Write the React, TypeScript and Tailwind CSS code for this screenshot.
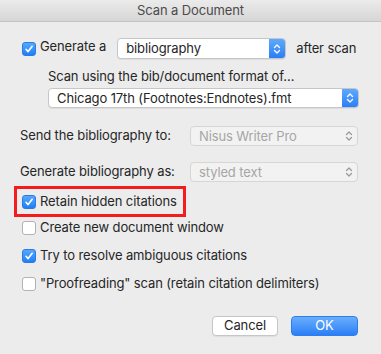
import React from 'react';

const FONT = { fontFamily: 'Inter, "Liberation Sans", sans-serif' };

const Checkbox: React.FC<{ checked?: boolean }> = ({ checked }) =>
  checked ? (
    <div className="w-[14px] h-[14px] rounded-[3px] bg-gradient-to-b from-[#56a8fc] to-[#1d7ff6] border border-[#2b7ae6] flex items-center justify-center shrink-0">
      <svg width="10" height="10" viewBox="0 0 10 10">
        <path d="M2 5.3 L4.1 7.6 L8.2 2.3" fill="none" stroke="white" strokeWidth="1.6" strokeLinecap="round" strokeLinejoin="round" />
      </svg>
    </div>
  ) : (
    <div className="w-[14px] h-[14px] rounded-[3px] bg-white border border-[#b3b3b3] shrink-0" />
  );

const Chevrons: React.FC<{ color: string }> = ({ color }) => (
  <svg width="10" height="14" viewBox="0 0 10 14">
    <path d="M2.5 5.5 L5 3 L7.5 5.5" fill="none" stroke={color} strokeWidth="1.3" strokeLinecap="round" strokeLinejoin="round" />
    <path d="M2.5 8.5 L5 11 L7.5 8.5" fill="none" stroke={color} strokeWidth="1.3" strokeLinecap="round" strokeLinejoin="round" />
  </svg>
);

const Popup: React.FC<{ label: string; className: string; disabled?: boolean }> = ({ label, className, disabled }) =>
  disabled ? (
    <div className={`flex items-center rounded-[4px] border border-[#d6d6d6] bg-[#f2f2f2] ${className}`}>
      <span className="flex-1 pl-[8px] text-[#a6a6a6] leading-none">{label}</span>
      <div className="w-[16px] flex items-center justify-center">
        <Chevrons color="#9a9a9a" />
      </div>
    </div>
  ) : (
    <div className={`flex items-center rounded-[4px] border border-[#c6c6c6] bg-white shadow-[0_1px_0_rgba(0,0,0,0.06)] overflow-hidden ${className}`}>
      <span className="flex-1 pl-[8px] text-[#262626] leading-none">{label}</span>
      <div className="w-[16px] h-full bg-gradient-to-b from-[#5fa9fc] to-[#2a7ef6] flex items-center justify-center">
        <Chevrons color="white" />
      </div>
    </div>
  );

export default function App() {
  return (
    <div className="w-[381px] h-[354px] bg-[#ececec] flex flex-col text-[13px] tracking-[-0.12px] text-[#262626]" style={FONT}>
      <div className="h-[22px] bg-gradient-to-b from-[#ebebeb] to-[#d6d6d6] border-b border-[#c4c4c4] flex items-center justify-center text-[#4b4b4b]">
        Scan a Document
      </div>

      <div className="flex flex-col pl-[20px]">
        <div className="mt-[16px] h-[21px] flex items-center ml-[2px]">
          <Checkbox checked />
          <span className="ml-[4px] -mt-[3px]">Generate a</span>
          <Popup label="bibliography" className="ml-[11px] w-[169px] h-[21px]" />
          <span className="ml-[10px]">after scan</span>
        </div>

        <div className="mt-[9px] ml-[28px] h-[16px] leading-[16px]">Scan using the bib/document format of…</div>
        <Popup label="Chicago 17th (Footnotes:Endnotes).fmt" className="mt-[4px] ml-[28px] w-[311px] h-[20px]" />

        <div className="mt-[18px] h-[20px] flex items-center">
          <span className="w-[170px]">Send the bibliography to:</span>
          <Popup label="Nisus Writer Pro" className="w-[168px] h-[20px]" disabled />
        </div>

        <div className="mt-[16px] h-[20px] flex items-center">
          <span className="w-[170px]">Generate bibliography as:</span>
          <Popup label="styled text" className="w-[168px] h-[20px]" disabled />
        </div>

        <div className="mt-[4px] -ml-[6px] w-[172px] h-[31px] border-[3px] border-[#f41c1c] flex items-center pl-[5px]">
          <Checkbox checked />
          <span className="ml-[4px]">Retain hidden citations</span>
        </div>

        <div className="mt-[2px] h-[18px] ml-[2px] flex items-center">
          <Checkbox />
          <span className="ml-[4px]">Create new document window</span>
        </div>

        <div className="mt-[10px] h-[18px] ml-[2px] flex items-center">
          <Checkbox checked />
          <span className="ml-[4px]">Try to resolve ambiguous citations</span>
        </div>

        <div className="mt-[10px] h-[18px] ml-[2px] flex items-center">
          <Checkbox />
          <span className="ml-[4px]">"Proofreading" scan (retain citation delimiters)</span>
        </div>

        <div className="mt-[23px] ml-[192px] flex items-center gap-[13px]">
          <div className="w-[66px] h-[20px] rounded-[4px] bg-white border border-[#c6c6c6] shadow-[0_1px_0_rgba(0,0,0,0.06)] flex items-center justify-center text-[#262626]">
            Cancel
          </div>
          <div className="w-[67px] h-[20px] rounded-[4px] bg-gradient-to-b from-[#69aefc] to-[#2a7ef6] border border-[#2f7ef0] flex items-center justify-center text-white">
            OK
          </div>
        </div>
      </div>
    </div>
  );
}
